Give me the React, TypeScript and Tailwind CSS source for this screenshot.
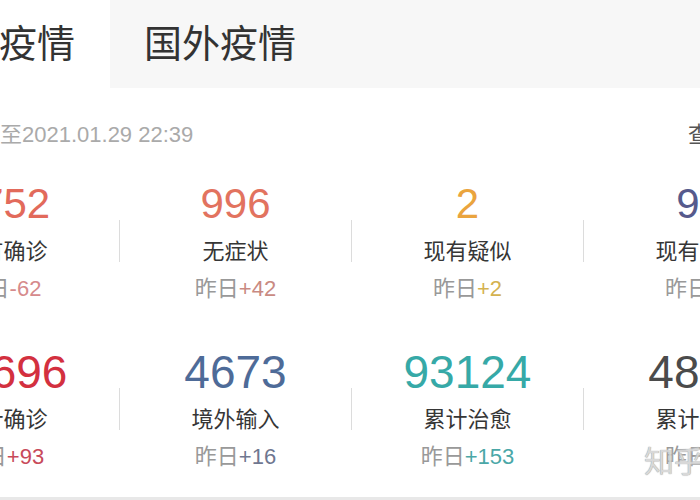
import React from "react";

interface StatItem {
  value: string;
  label: string;
  delta: string;
  valueColor: string;
  deltaColor: string;
}

const rows: StatItem[][] = [
  [
    { value: "1752", label: "现有确诊", delta: "-62", valueColor: "text-[#e26a5b]", deltaColor: "text-[#d68a8c]" },
    { value: "996", label: "无症状", delta: "+42", valueColor: "text-[#e2735f]", deltaColor: "text-[#c98a82]" },
    { value: "2", label: "现有疑似", delta: "+2", valueColor: "text-[#eaa43e]", deltaColor: "text-[#d4b250]" },
    { value: "97", label: "现有重症", delta: "+3", valueColor: "text-[#565a8c]", deltaColor: "text-[#7a7ea0]" },
  ],
  [
    { value: "99696", label: "累计确诊", delta: "+93", valueColor: "text-[#d3303f]", deltaColor: "text-[#c84a5a]" },
    { value: "4673", label: "境外输入", delta: "+16", valueColor: "text-[#4e6b98]", deltaColor: "text-[#6f7790]" },
    { value: "93124", label: "累计治愈", delta: "+153", valueColor: "text-[#36a9a7]", deltaColor: "text-[#4aa7a7]" },
    { value: "4820", label: "累计死亡", delta: "+0", valueColor: "text-[#4b4b4b]", deltaColor: "text-[#777777]" },
  ],
];

const font = "font-['Liberation_Sans','Noto_Sans_CJK_SC',sans-serif]";

function StatCell({ item, big }: { item: StatItem; big: boolean }) {
  return (
    <div className="w-[231px] flex flex-col items-center">
      <div className={`h-[48px] leading-[48px] ${big ? "text-[46px]" : "text-[42px]"} ${item.valueColor}`}>
        {item.value}
      </div>
      <div className="mt-[6px] leading-[36px] text-[22px] text-[#363636]">{item.label}</div>
      <div className="mt-[2px] leading-[34px] text-[22px] text-[#999999]">
        昨日<span className={item.deltaColor}>{item.delta}</span>
      </div>
    </div>
  );
}

export default function App() {
  return (
    <div className={`relative w-[700px] h-[500px] overflow-hidden bg-white ${font}`}>
      <div className="-ml-[112px] w-[928px]">
        {/* 标签栏 */}
        <div className="flex h-[88px] bg-[#f7f7f7]">
          <div className="w-[222px] flex items-center justify-center bg-white text-[38px] text-[#333333]">
            国内疫情
          </div>
          <div className="w-[220px] flex items-center justify-center text-[38px] text-[#333333]">
            国外疫情
          </div>
        </div>

        {/* 更新时间 */}
        <div className="mt-[32px] flex items-center pl-[90px] pr-[40px] leading-[30px] text-[22px]">
          <span className="text-[#aaaaaa]">截至2021.01.29 22:39</span>
          <span className="ml-auto text-[#555555]">查看详情</span>
        </div>

        {/* 数据 */}
        {rows.map((row, i) => (
          <div key={i} className={`flex ${i === 0 ? "mt-[30px]" : "mt-[42px]"}`}>
            {row.map((item, j) => (
              <React.Fragment key={item.label}>
                {j > 0 && <div className="w-px h-[42px] mt-[40px] bg-[#dcdcdc]" />}
                <StatCell item={item} big={i === 1} />
              </React.Fragment>
            ))}
          </div>
        ))}
      </div>

      <div className="absolute left-0 right-0 bottom-0 h-[3px] bg-[#e8e8e8]" />

      {/* 水印 */}
      <div className="absolute left-[644px] top-[444px] whitespace-nowrap text-[30px] leading-[36px] text-[#d4d4d4] [text-shadow:0_0_1px_#777777,0_0_2px_#ffffff] opacity-90">
        知乎
      </div>
    </div>
  );
}
